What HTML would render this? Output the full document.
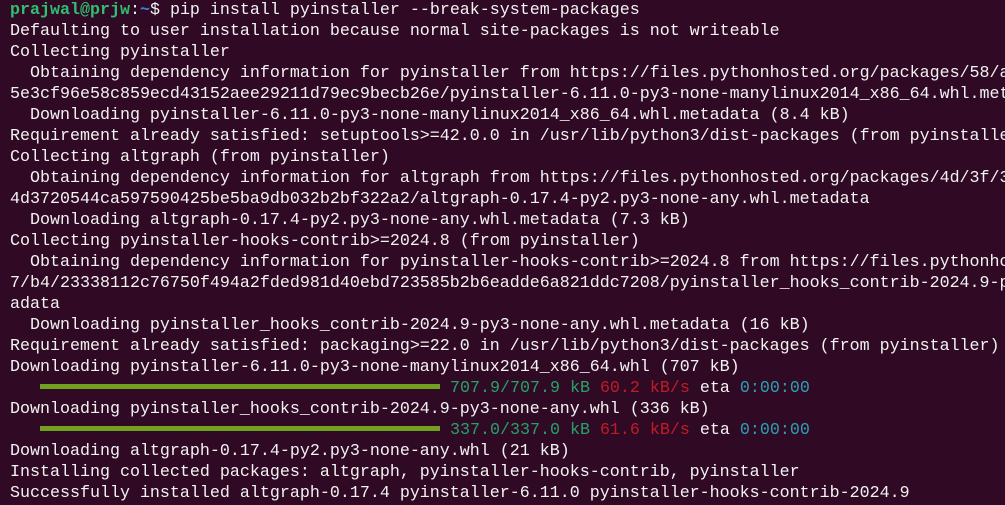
<!DOCTYPE html>
<html><head><meta charset="utf-8"><style>
html,body{margin:0;padding:0;background:#300a24;width:1005px;height:505px;overflow:hidden}
pre{margin:0;position:absolute;top:0px;left:10px;font-family:"Liberation Mono",monospace;font-size:16.67px;line-height:21px;color:#f2f2f2;white-space:pre}
.u{color:#2fbf71;font-weight:bold}.p{color:#3d7fe0;font-weight:bold}
.g{color:#26a269}.r{color:#c01c28}.c{color:#2aa1b3}
.bar{display:inline-block;width:400px;height:5px;background:#73a020;vertical-align:middle;margin-bottom:3px}
</style></head><body><pre><span class="u">prajwal@prjw</span>:<span class="p">~</span>$ pip install pyinstaller --break-system-packages
Defaulting to user installation because normal site-packages is not writeable
Collecting pyinstaller
  Obtaining dependency information for pyinstaller from https://files.pythonhosted.org/packages/58/a
5e3cf96e58c859ecd43152aee29211d79ec9becb26e/pyinstaller-6.11.0-py3-none-manylinux2014_x86_64.whl.met
  Downloading pyinstaller-6.11.0-py3-none-manylinux2014_x86_64.whl.metadata (8.4 kB)
Requirement already satisfied: setuptools>=42.0.0 in /usr/lib/python3/dist-packages (from pyinstalle
Collecting altgraph (from pyinstaller)
  Obtaining dependency information for altgraph from https://files.pythonhosted.org/packages/4d/3f/3
4d3720544ca597590425be5ba9db032b2bf322a2/altgraph-0.17.4-py2.py3-none-any.whl.metadata
  Downloading altgraph-0.17.4-py2.py3-none-any.whl.metadata (7.3 kB)
Collecting pyinstaller-hooks-contrib>=2024.8 (from pyinstaller)
  Obtaining dependency information for pyinstaller-hooks-contrib>=2024.8 from https://files.pythonho
7/b4/23338112c76750f494a2fded981d40ebd723585b2b6eadde6a821ddc7208/pyinstaller_hooks_contrib-2024.9-p
adata
  Downloading pyinstaller_hooks_contrib-2024.9-py3-none-any.whl.metadata (16 kB)
Requirement already satisfied: packaging>=22.0 in /usr/lib/python3/dist-packages (from pyinstaller)
Downloading pyinstaller-6.11.0-py3-none-manylinux2014_x86_64.whl (707 kB)
   <span class="bar"></span> <span class="g">707.9/707.9 kB</span> <span class="r">60.2 kB/s</span> eta <span class="c">0:00:00</span>
Downloading pyinstaller_hooks_contrib-2024.9-py3-none-any.whl (336 kB)
   <span class="bar"></span> <span class="g">337.0/337.0 kB</span> <span class="r">61.6 kB/s</span> eta <span class="c">0:00:00</span>
Downloading altgraph-0.17.4-py2.py3-none-any.whl (21 kB)
Installing collected packages: altgraph, pyinstaller-hooks-contrib, pyinstaller
Successfully installed altgraph-0.17.4 pyinstaller-6.11.0 pyinstaller-hooks-contrib-2024.9</pre></body></html>
